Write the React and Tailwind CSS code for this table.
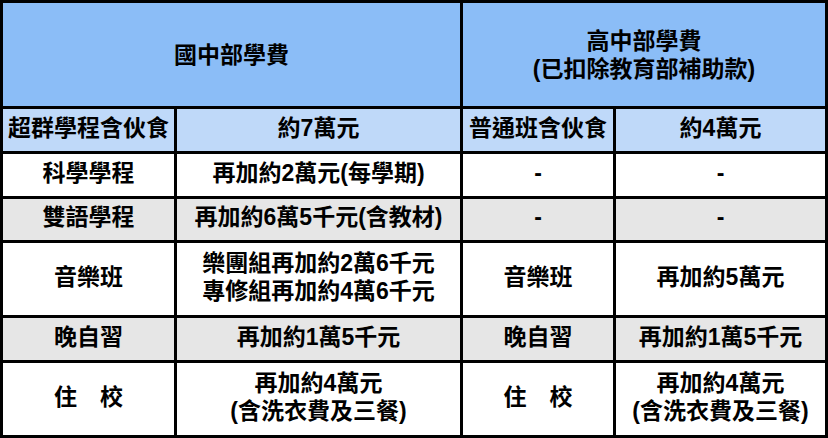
import React from "react";

const font = { fontFamily: '"Liberation Sans", "Noto Sans CJK TC", sans-serif' };

const rows = [
  { bg: "bg-white", cells: ["科學學程", "再加約2萬元(每學期)", "-", "-"] },
  { bg: "bg-[#e6e6e6]", cells: ["雙語學程", "再加約6萬5千元(含教材)", "-", "-"] },
  { bg: "bg-white", cells: ["音樂班", ["樂團組再加約2萬6千元", "專修組再加約4萬6千元"], "音樂班", "再加約5萬元"] },
  { bg: "bg-[#e6e6e6]", cells: ["晚自習", "再加約1萬5千元", "晚自習", "再加約1萬5千元"] },
  { bg: "bg-white", cells: ["住\u3000校", ["再加約4萬元", "(含洗衣費及三餐)"], "住\u3000校", ["再加約4萬元", "(含洗衣費及三餐)"]] },
];

function Cell({ bg, children, className = "pb-[5px]" }) {
  return (
    <div className={`${bg} flex flex-col items-center justify-center text-center leading-[28px] ${className}`}>
      {Array.isArray(children) ? children.map((line, i) => <span key={i}>{line}</span>) : children}
    </div>
  );
}

export default function App() {
  return (
    <div
      style={font}
      className="w-[828px] h-[438px] bg-black p-[3px] grid gap-[3px] grid-cols-[171px_283px_150px_209px] grid-rows-[103px_42px_42px_41px_72px_42px_72px] text-[23px] font-bold text-black"
    >
      <Cell bg="bg-[#8bbdf7]" className="col-span-2">國中部學費</Cell>
      <Cell bg="bg-[#8bbdf7]" className="col-span-2">
        {["高中部學費", "(已扣除教育部補助款)"]}
      </Cell>

      <Cell bg="bg-[#bfd9f9]">超群學程含伙食</Cell>
      <Cell bg="bg-[#bfd9f9]">約7萬元</Cell>
      <Cell bg="bg-[#bfd9f9]">普通班含伙食</Cell>
      <Cell bg="bg-[#bfd9f9]">約4萬元</Cell>

      {rows.map((r, i) =>
        r.cells.map((c, j) => (
          <Cell key={`${i}-${j}`} bg={r.bg}>{c}</Cell>
        ))
      )}
    </div>
  );
}
